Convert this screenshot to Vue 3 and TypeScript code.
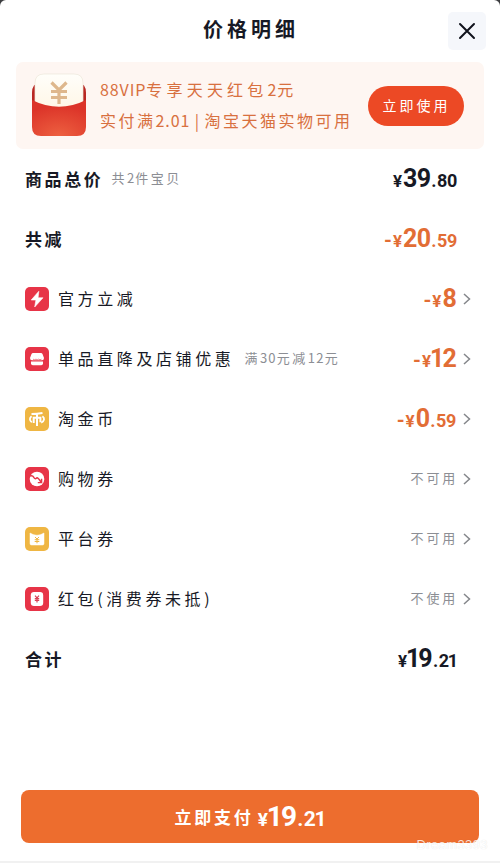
<script setup lang="ts">
interface Piece {
  text: string
  latin?: boolean
}

interface Row {
  key: string
  icon?: 'bolt' | 'shop' | 'coin' | 'voucher' | 'ticket' | 'packet'
  label: string
  note?: string
  minus?: boolean
  whole?: string
  cents?: string
  status?: string
  tone?: 'dark' | 'orange'
  link?: boolean
}

const rows: Row[] = [
  { key: 'total', label: '商品总价', note: '共2件宝贝', whole: '39', cents: '.80', tone: 'dark' },
  { key: 'saved', label: '共减', minus: true, whole: '20', cents: '.59', tone: 'orange' },
  { key: 'official', icon: 'bolt', label: '官方立减', minus: true, whole: '8', tone: 'orange', link: true },
  { key: 'shop', icon: 'shop', label: '单品直降及店铺优惠', note: '满30元减12元', minus: true, whole: '12', tone: 'orange', link: true },
  { key: 'coin', icon: 'coin', label: '淘金币', minus: true, whole: '0', cents: '.59', tone: 'orange', link: true },
  { key: 'voucher', icon: 'voucher', label: '购物券', status: '不可用', link: true },
  { key: 'platform', icon: 'ticket', label: '平台券', status: '不可用', link: true },
  { key: 'packet', icon: 'packet', label: '红包(消费券未抵)', status: '不使用', link: true },
  { key: 'sum', label: '合计', whole: '19', cents: '.21', tone: 'dark' },
]

const promo: string[] = ['88VIP专享天天红包2元', '实付满2.01 | 淘宝天猫实物可用']

function pieces(text: string): Piece[] {
  return (text.match(/[\x20-\x7e]+|[^\x20-\x7e]+/g) ?? []).map((part) => ({
    text: part,
    latin: /^[\x20-\x7e]/.test(part),
  }))
}
</script>

<template>
  <main class="screen">
    <section class="sheet">
      <header class="head">
        <h1 class="title">价格明细</h1>
        <button class="close" aria-label="关闭">
          <svg viewBox="0 0 38 38" width="38" height="38">
            <path d="M12 12 L26 26 M26 12 L12 26" fill="none" stroke="#11131c" stroke-width="2" stroke-linecap="round" />
          </svg>
        </button>
      </header>

      <div class="banner">
        <svg class="envelope" viewBox="0 0 56 64" width="56" height="64">
          <defs>
            <linearGradient id="paper" x1="0" y1="0" x2="0" y2="1">
              <stop offset="0" stop-color="#fffefa" />
              <stop offset="1" stop-color="#fff6e4" />
            </linearGradient>
            <radialGradient id="pocket" cx=".5" cy="1" r=".85">
              <stop offset="0" stop-color="#ed6040" />
              <stop offset="1" stop-color="#dc3429" />
            </radialGradient>
          </defs>
          <path d="M1 20 Q1 10 9 10 H47 Q55 10 55 20 V40 H1Z" fill="#b92823" />
          <path d="M4 10 Q4 1 13 1 H43 Q52 1 52 10 V40 H4Z" fill="url(#paper)" stroke="#ece6da" stroke-width=".7" />
          <path d="M20.5 9.5 L28 17 L35.5 9.5 M20 18.5 H36 M20 24.5 H36 M28 17 V31" fill="none" stroke="#deb78c" stroke-width="3.2" />
          <path d="M1 27 Q28 40.5 55 27 V54 Q55 63 46 63 H10 Q1 63 1 54Z" fill="url(#pocket)" />
        </svg>
        <div class="promo">
          <p v-for="(line, n) in promo" :key="n" class="promo-line">
            <span v-for="(p, i) in pieces(line)" :key="i" :class="{ latin: p.latin }">{{ p.text }}</span>
          </p>
        </div>
        <button class="use">立即使用</button>
      </div>

      <ul class="rows">
        <li v-for="row in rows" :key="row.key" class="row">
          <svg v-if="row.icon" class="icon" viewBox="0 0 24 24" width="24" height="24">
            <rect width="24" height="24" rx="5" :fill="row.icon === 'coin' || row.icon === 'ticket' ? '#efb643' : '#e73447'" />
            <path v-if="row.icon === 'bolt'" d="M13.8 4.3 L6.2 13 H10.9 L9.7 20 L18 10.8 H13.1Z" fill="#fff" stroke="#fff" stroke-width=".6" stroke-linejoin="round" />
            <g v-else-if="row.icon === 'shop'" fill="#fff">
              <path d="M8 6 H16 Q17 6 17.5 7 L19 11 Q19 13.2 17 13.2 H7 Q5 13.2 5 11 L6.5 7 Q7 6 8 6Z" />
              <path d="M6 14.6 H18 V16.5 Q18 18.3 16.2 18.3 H7.8 Q6 18.3 6 16.5Z" />
              <path d="M8 12.2 Q9.5 13.2 11 12.2 Q12.2 13.2 13.5 12.2 Q15 13.2 16.5 12.2" fill="none" stroke="#e73447" stroke-width=".6" />
            </g>
            <g v-else-if="row.icon === 'coin'" fill="none" stroke="#fff" stroke-width="2">
              <path d="M6.5 7 Q12 7 17.5 6 M12 7 V19" />
              <path d="M8.7 16 V10.8 H15.4 V15.2" />
              <path d="M6.6 9.2 A5.2 4 0 0 0 6.8 15.2 M17.4 9.2 A5.2 4 0 0 1 16.2 15.7" stroke-width="1.8" />
            </g>
            <g v-else-if="row.icon === 'voucher'">
              <circle cx="12" cy="12" r="7.3" fill="#fff" />
              <path d="M5 9 Q7.5 8 9 10.6 Q10.3 12.6 12 10.8 Q13.2 10.7 16 15" fill="none" stroke="#e73447" stroke-width="1.5" />
              <path d="M16.6 11.7 V15.6 H12.8" fill="none" stroke="#e73447" stroke-width="1.4" />
            </g>
            <g v-else-if="row.icon === 'ticket'">
              <path d="M5 6 L8.2 7.6 Q12 9 15.8 7.6 L19 6 V16.5 Q19 18 17.5 18 H6.5 Q5 18 5 16.5Z" fill="#fff" stroke="#fff" stroke-width=".5" stroke-linejoin="round" />
              <path d="M10 10 L12 12 L14 10 M9.7 12.7 H14.3 M9.7 14.5 H14.3 M12 12 V16.3" fill="none" stroke="#efb643" stroke-width="1" />
            </g>
            <g v-else>
              <rect x="5.8" y="5" width="12.4" height="14" rx="3.2" fill="#fff" />
              <path d="M10 8.6 L12 10.8 L14 8.6 M9.8 11.6 H14.2 M9.8 13.3 H14.2 M12 10.8 V15.5" fill="none" stroke="#d94156" stroke-width="1.2" />
            </g>
          </svg>
          <span class="label" :class="{ strong: !row.icon }">
            <span v-for="(p, i) in pieces(row.label)" :key="i" :class="{ latin: p.latin }">{{ p.text }}</span>
          </span>
          <span v-if="row.note" class="note" :class="{ far: row.icon }">
            <span v-for="(p, i) in pieces(row.note)" :key="i" :class="{ latin: p.latin }">{{ p.text }}</span>
          </span>
          <span class="value" :class="{ inset: !row.link }">
            <span v-if="row.status" class="status">{{ row.status }}</span>
            <span v-else class="price" :class="row.tone">
              <span v-if="row.minus" class="minus">-</span><span class="yen">¥</span><span class="whole"><span v-for="(d, i) in row.whole" :key="i" :class="{ one: d === '1' }">{{ d }}</span></span><span v-if="row.cents" class="cents"><span v-for="(d, i) in row.cents" :key="i" :class="{ one: d === '1', dot: d === '.' }">{{ d }}</span></span>
            </span>
            <svg v-if="row.link" class="chevron" viewBox="0 0 8 12" width="8" height="12">
              <path d="M1 1 L6.5 6 L1 11" fill="none" stroke="#85878b" stroke-width="1.5" />
            </svg>
          </span>
        </li>
      </ul>

      <footer class="foot">
        <button class="pay">
          <span class="pay-text">立即支付</span>
          <span class="price"><span class="yen">¥</span><span class="whole"><span class="one">1</span>9</span><span class="cents"><span class="dot">.</span>2<span class="one">1</span></span></span>
        </button>
        <span class="watermark">Dream3393</span>
      </footer>
    </section>
  </main>
</template>

<style>
body {
  background: #3c3d40;
}
</style>

<style scoped>
.screen {
  height: 863px;
  overflow: hidden;
  font-family: "Noto Sans CJK SC", sans-serif;
  color: #171925;
}
.sheet {
  display: flex;
  flex-direction: column;
  box-sizing: border-box;
  height: 863px;
  background: #fff;
  border-radius: 6px 6px 0 0;
  border-bottom: 2px solid #f1f1f1;
}
button {
  border: 0;
  padding: 0;
  font-family: inherit;
}
.head {
  display: grid;
  grid-template-columns: 52px 1fr 52px;
  align-items: center;
  height: 62px;
}
.title {
  grid-column: 2;
  margin: 0;
  padding: 0 0 4px 2px;
  text-align: center;
  font-size: 20px;
  line-height: 30px;
  letter-spacing: 4px;
  font-weight: 700;
}
.close {
  width: 38px;
  height: 38px;
  border-radius: 5px;
  background: #f5f7fb;
}
.close svg {
  display: block;
}
.banner {
  display: flex;
  align-items: center;
  box-sizing: border-box;
  height: 87px;
  margin: 0 16px;
  padding: 0 20px 0 15px;
  border-radius: 7px;
  background: #fef6f2;
}
.envelope {
  flex: none;
  margin-bottom: 1px;
}
.promo {
  flex: 1;
  margin: 0 0 2px 13px;
  color: #d8703f;
  white-space: nowrap;
}
.promo-line {
  margin: 0;
  font-size: 16px;
  line-height: 31px;
  letter-spacing: 4.2px;
}
.promo-line + .promo-line {
  letter-spacing: 2.5px;
}
.promo-line .latin {
  letter-spacing: 0.9px;
  white-space: pre;
}
.use {
  flex: none;
  width: 96px;
  height: 40px;
  padding: 0 0 2px 1px;
  border-radius: 20px;
  background: #ec4925;
  color: #fff;
  font-size: 14px;
  letter-spacing: 3px;
}
.rows {
  margin: 0;
  padding: 0 29px 0 25px;
  list-style: none;
}
.row {
  display: flex;
  align-items: center;
  height: 60px;
  white-space: nowrap;
}
.icon {
  flex: none;
  margin-right: 9px;
}
.label {
  margin-bottom: 2px;
  font-size: 16px;
  letter-spacing: 3.6px;
}
.label.strong {
  font-size: 17px;
  letter-spacing: 2.6px;
  font-weight: 700;
}
.note {
  margin: 0 0 3px 8px;
  font-size: 13px;
  letter-spacing: 2.5px;
  color: #8c8e94;
}
.note.far {
  margin-left: 10px;
}
.note .latin {
  letter-spacing: 1.2px;
}
.value {
  display: flex;
  align-items: center;
  gap: 7px;
  margin-left: auto;
}
.value.inset {
  padding-right: 14px;
}
.status {
  margin: 0 -2px 3px 0;
  font-size: 13px;
  letter-spacing: 2.8px;
  color: #8c8e94;
}
.chevron {
  flex: none;
}
.price {
  display: flex;
  align-items: baseline;
  padding-top: 2px;
  font-family: Roboto, "Liberation Sans", sans-serif;
  font-weight: 700;
  line-height: 30px;
}
.price.orange {
  color: #e26d35;
}
.minus {
  font-size: 20px;
  margin-right: 1px;
}
.yen {
  font-size: 17px;
  margin-right: 1px;
}
.whole {
  font-size: 25px;
  letter-spacing: -0.8px;
}
.cents {
  font-size: 18px;
  letter-spacing: -0.3px;
}
.one {
  margin-left: -2px;
  letter-spacing: -2px;
}
.cents .one {
  margin-left: -1px;
  letter-spacing: -1px;
}
.dot {
  margin-left: 1px;
  letter-spacing: 0.5px;
}
.foot {
  position: relative;
  margin: auto 21px 18px;
}
.pay {
  display: flex;
  align-items: center;
  justify-content: center;
  gap: 4px;
  width: 100%;
  height: 53px;
  border-radius: 8px;
  background: #ed6d2e;
  color: #fff;
}
.pay-text {
  font-size: 17px;
  font-weight: 700;
  letter-spacing: 2.8px;
}
.pay .price {
  padding-top: 3px;
}
.pay .whole {
  font-size: 28px;
}
.pay .yen {
  font-size: 19px;
}
.pay .cents {
  font-size: 21px;
}
.watermark {
  position: absolute;
  right: -9px;
  bottom: -11px;
  font-family: "Liberation Sans", sans-serif;
  font-size: 13px;
  line-height: 18px;
  letter-spacing: 0.4px;
  color: #fff;
  opacity: 0.8;
  text-shadow: 0 0 1px rgba(0, 0, 0, 0.15);
}
</style>
